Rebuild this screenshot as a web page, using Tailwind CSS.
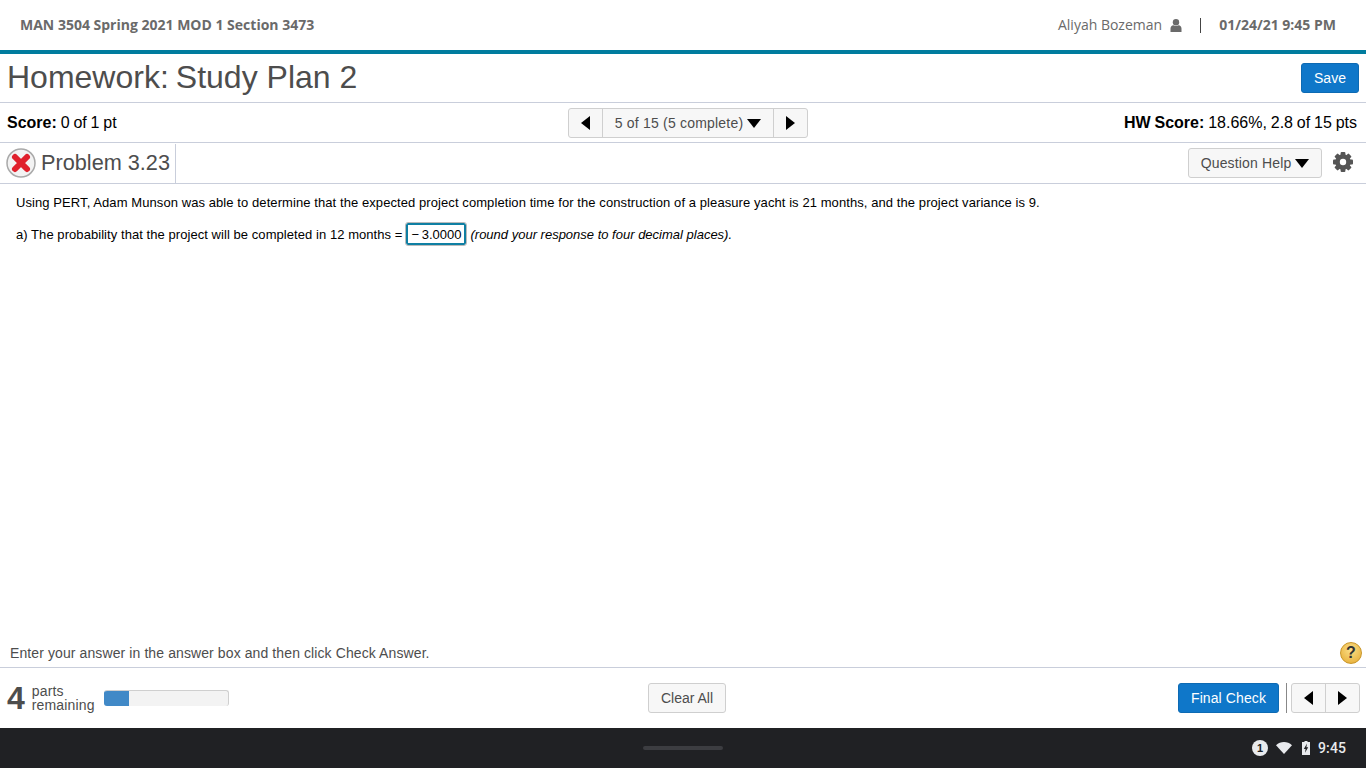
<!DOCTYPE html>
<html lang="en">
<head>
  <meta charset="UTF-8"/>
  <title>Homework: Study Plan 2</title>
  <script src="https://cdn.jsdelivr.net/npm/@tailwindcss/browser@4"></script>
</head>
<body class="bg-white overflow-hidden font-['Liberation_Sans',Arial,sans-serif]">
<div class="flex flex-col h-[768px] w-[1366px]">
  <!-- Course header -->
  <header class="h-[54px] shrink-0 border-b-4 border-[#007c9e] flex items-center justify-between pl-5 pr-[30px] font-['Open_Sans',sans-serif] text-sm text-[#6a6a6a]">
    <span class="font-bold">MAN 3504 Spring 2021 MOD 1 Section 3473</span>
    <div class="flex items-center">
      <span>Aliyah Bozeman</span>
      <svg class="ml-2 w-[12px] h-[13px] fill-[#6a6a6a]" viewBox="0 0 12 13"><circle cx="6" cy="3.2" r="3.2"/><path d="M0.5 13 V9.5 C0.5 7.6 1.8 6.4 3.4 6.2 C4.8 7.2 7.2 7.2 8.6 6.2 C10.2 6.4 11.5 7.6 11.5 9.5 V13 Z"/></svg>
      <span class="ml-[18px] w-px h-[15px] bg-[#444]"></span>
      <span class="ml-[18px] font-bold">01/24/21 9:45 PM</span>
    </div>
  </header>

  <!-- Title -->
  <div class="h-[49px] shrink-0 border-b border-[#c9cedb] flex items-center justify-between px-[7px]">
    <h1 class="text-[32px] text-[#4d4d4d] leading-none mb-[2px]">Homework:<span class="ml-[7px]">Study Plan 2</span></h1>
    <button class="w-[58px] h-[30px] bg-[#0f77c9] border border-[#0d6ab3] rounded-[3px] text-white text-sm">Save</button>
  </div>

  <!-- Score row -->
  <div class="h-[40px] shrink-0 border-b border-[#c9cedb] flex items-center justify-between pl-[7px] pr-[9px] text-base text-black relative [word-spacing:-0.6px]">
    <div><b>Score:</b> 0 of 1 pt</div>
    <div class="absolute left-[568px] top-[5px] h-[30px] w-[240px] flex bg-[#f7f7f7] border border-[#cfcfcf] rounded-[3px] text-sm text-[#4d4d4d] tracking-[0.2px] [word-spacing:0]">
      <div class="w-[34px] flex items-center justify-center border-r border-[#cfcfcf]">
        <svg class="w-[9px] h-[14px]" viewBox="0 0 9 14"><path d="M9 0V14L0 7Z"/></svg>
      </div>
      <div class="flex-1 flex items-center justify-center gap-1">5 of 15 (5 complete)
        <svg class="w-[14px] h-[9px]" viewBox="0 0 14 9"><path d="M0 0H14L7 9Z"/></svg>
      </div>
      <div class="w-[34px] flex items-center justify-center border-l border-[#cfcfcf]">
        <svg class="w-[9px] h-[14px]" viewBox="0 0 9 14"><path d="M0 0V14L9 7Z"/></svg>
      </div>
    </div>
    <div><b>HW Score:</b> 18.66%, 2.8 of 15 pts</div>
  </div>

  <!-- Problem row -->
  <div class="h-[41px] shrink-0 border-b border-[#c9cedb] flex items-center justify-between pl-[6px] pr-3">
    <div class="flex items-center h-full">
      <svg class="w-[30px] h-[30px]" viewBox="0 0 30 30">
        <circle cx="15" cy="15" r="14" fill="#f3f3f3" stroke="#a9a9a9" stroke-width="1.5"/>
        <path d="M9 9L21 21M21 9L9 21" stroke="#e0202c" stroke-width="6" stroke-linecap="round"/>
      </svg>
      <span class="ml-[5px] text-[21.7px] text-[#4d4d4d]">Problem 3.23</span>
      <span class="ml-[5px] w-px h-[39px] bg-[#c9cedb]"></span>
    </div>
    <div class="flex items-center">
      <button class="w-[134px] h-[30px] flex items-center justify-center gap-1 bg-[#f7f7f7] border border-[#cfcfcf] rounded-[3px] text-sm text-[#4d4d4d] tracking-[0.15px]">Question Help
        <svg class="w-[14px] h-[9px]" viewBox="0 0 14 9"><path d="M0 0H14L7 9Z"/></svg>
      </button>
      <svg class="ml-[10px] mb-[2px] w-[22px] h-[22px] text-[#555]" viewBox="0 0 22 22" fill="currentColor">
        <circle cx="11" cy="11" r="5.8" fill="none" stroke="currentColor" stroke-width="4"/>
        <rect x="8.6" y="1" width="4.8" height="20" rx="1"/>
        <rect x="8.6" y="1" width="4.8" height="20" rx="1" transform="rotate(45 11 11)"/>
        <rect x="8.6" y="1" width="4.8" height="20" rx="1" transform="rotate(90 11 11)"/>
        <rect x="8.6" y="1" width="4.8" height="20" rx="1" transform="rotate(135 11 11)"/>
        <circle cx="11" cy="11" r="3.2" fill="#fff"/>
      </svg>
    </div>
  </div>

  <!-- Question -->
  <main class="flex-1 pl-4 pt-[10px] text-[13px] text-black leading-[18px]">
    <p class="tracking-[0.08px]">Using PERT, Adam Munson was able to determine that the expected project completion time for the construction of a pleasure yacht is 21 months, and the project variance is 9.</p>
    <p class="mt-[11px] flex items-center h-[22px]">
      <span class="mt-px tracking-[0.06px]">a) The probability that the project will be completed in 12 months =</span>
      <span class="ml-[4px] w-[60px] h-[22px] pt-px flex items-center justify-center border-2 border-[#0f7fa3] outline outline-1 outline-[#bbb] rounded-[2px]">&minus;&thinsp;3.0000</span>
      <i class="mt-px ml-[4px]">(round your response to four decimal places).</i>
    </p>
  </main>

  <!-- Instructions -->
  <div class="h-[30px] shrink-0 border-b border-[#c9cedb] flex items-center justify-between pl-[10px] pr-1 text-sm tracking-[0.1px] text-[#4d4d4d]">
    <span class="mt-px">Enter your answer in the answer box and then click Check Answer.</span>
    <span class="w-[22px] h-[22px] rounded-full bg-[radial-gradient(circle_at_50%_35%,#fbe08a,#e5a92e)] border border-[#c9962a] flex items-center justify-center font-bold text-base text-[#333]">?</span>
  </div>

  <!-- Footer -->
  <footer class="h-[60px] shrink-0 flex items-center justify-between pl-[7px] pr-[6px] relative">
    <div class="flex items-center">
      <span class="text-[32px] font-bold text-[#4d4d4d] leading-none">4</span>
      <span class="ml-[7px] text-[14px] leading-[14px] text-[#4d4d4d] tracking-[0.15px]">parts<br/>remaining</span>
      <div class="ml-[9px] w-[125px] h-4 rounded-[3px] bg-[#f3f3f3] border-t border-r border-[#cfcfcf] overflow-hidden">
        <div class="w-[25px] h-full bg-[#4189c7]"></div>
      </div>
    </div>
    <button class="absolute left-[648px] top-[15px] w-[78px] h-[30px] bg-[#f7f7f7] border border-[#cfcfcf] rounded-[3px] text-sm text-[#4d4d4d]">Clear All</button>
    <div class="flex items-center">
      <button class="w-[101px] h-[30px] bg-[#0f77c9] border border-[#0d6ab3] rounded-[3px] text-white text-sm tracking-[0.1px]">Final Check</button>
      <span class="ml-[7px] w-px h-[30px] bg-[#888]"></span>
      <div class="ml-1 w-[69px] h-[30px] flex bg-[#f7f7f7] border border-[#cfcfcf] rounded-[3px]">
        <div class="flex-1 flex items-center justify-center border-r border-[#cfcfcf]">
          <svg class="w-[9px] h-[14px]" viewBox="0 0 9 14"><path d="M9 0V14L0 7Z"/></svg>
        </div>
        <div class="flex-1 flex items-center justify-center">
          <svg class="w-[9px] h-[14px]" viewBox="0 0 9 14"><path d="M0 0V14L9 7Z"/></svg>
        </div>
      </div>
    </div>
  </footer>

  <!-- Shelf -->
  <div class="h-[40px] shrink-0 bg-[#202124] relative flex items-center justify-end pr-5 text-[#e8eaed]">
    <span class="absolute left-[643px] top-[18px] w-20 h-1 rounded-full bg-[#3c3d41]"></span>
    <span class="w-4 h-4 rounded-full bg-[#e8eaed] text-[#202124] text-[11px] font-bold flex items-center justify-center">1</span>
    <svg class="ml-[8px] w-4 h-3 fill-[#e8eaed]" viewBox="0 0 16 12"><path d="M0 3.2C4.5-1 11.5-1 16 3.2L8 12Z"/></svg>
    <svg class="ml-[10px] w-[8px] h-[14px]" viewBox="0 0 8 14"><path fill="#e8eaed" d="M2.5 0H5.5V1H8V14H0V1H2.5Z"/><path fill="#202124" d="M5 2.5L1.8 8H3.6L3 11.8L6.2 6.2H4.4Z"/></svg>
    <span class="ml-[8px] text-[14px] font-['Roboto',sans-serif] font-medium tracking-[0.1px]">9:45</span>
  </div>
</div>
</body>
</html>
